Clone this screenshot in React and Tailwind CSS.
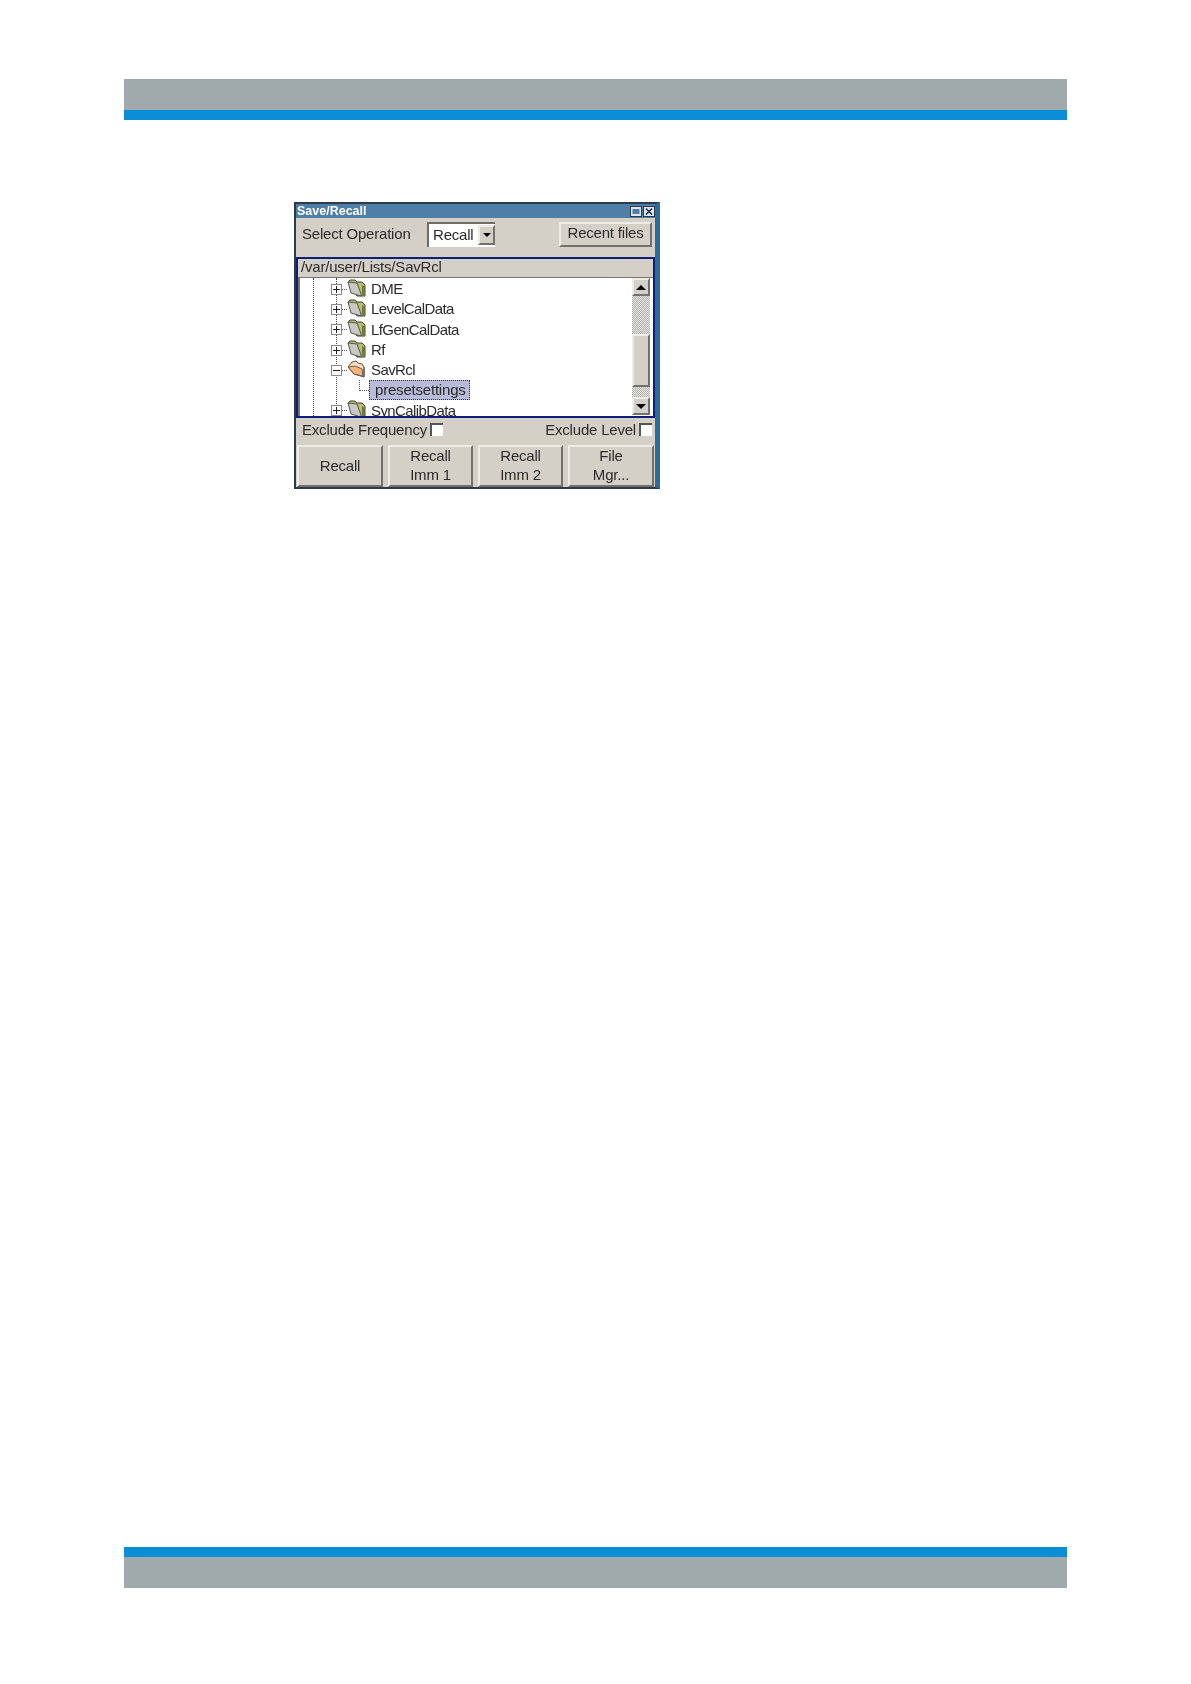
import React from "react";

const rows = [
  { name: "DME" },
  { name: "LevelCalData" },
  { name: "LfGenCalData" },
  { name: "Rf" },
  { name: "SavRcl", open: true },
  { name: "presetsettings", file: true },
  { name: "SynCalibData" },
];

const bevel = "border-2 border-t-[#eeece6] border-l-[#eeece6] border-r-[#73716c] border-b-[#73716c]";

const Folder = ({ open }) =>
  open ? (
    <svg width="19" height="18" viewBox="0 0 19 18" className="block shrink-0">
      <path d="M1 7 L5 2 L9 1 L11 3 L15 4 L17 7 L17 17 L7 14 Z" fill="#f8dcbc" stroke="#55504a" strokeWidth="1" />
      <path d="M1 7 L8 6 L15 9 L16 16 L7 14 Z" fill="#f4b47c" stroke="#6a5f52" strokeWidth="1" />
      <path d="M16 6 L18 8 L18 17 L16 16 Z" fill="#77746c" />
    </svg>
  ) : (
    <svg width="19" height="18" viewBox="0 0 19 18" className="block shrink-0">
      <path d="M1 3 L3 1 L8 1 L10 3 L15 3 L18 6 L18 17 L10 17 Z" fill="#b9bf6a" stroke="#3f3f36" strokeWidth="1" />
      <path d="M1 3 L10 4 L14 15 L14 17 L4 14 Z" fill="#c8c8c4" stroke="#55554e" strokeWidth="1" />
      <path d="M15 6 L18 8 L18 17 L15 17 Z" fill="#6f7a3a" />
    </svg>
  );

const Expander = ({ open }) => (
  <span className="relative flex h-[11px] w-[11px] shrink-0 items-center justify-center border border-[#8a8a8a] bg-white">
    <span className="absolute h-px w-[7px] bg-[#222]" />
    {!open && <span className="absolute h-[7px] w-px bg-[#222]" />}
  </span>
);

const TreeRow = ({ row }) => {
  if (row.file) {
    return (
      <div className="relative flex h-[20px] shrink-0 items-center pl-[69px]">
        <span className="absolute left-[59px] top-0 h-[11px] w-[10px] border-b border-l border-dotted border-[#555]" />
        <span className="flex h-[20px] w-[101px] items-center border border-dotted border-[#333] bg-[#b9bcd8] pl-[5px]">
          {row.name}
        </span>
      </div>
    );
  }
  return (
    <div className="flex h-[20.3px] shrink-0 items-center pl-[31px]">
      <Expander open={row.open} />
      <span className="w-[5px] shrink-0 border-t border-dotted border-[#555]" />
      <span className="-mt-[3px]">
        <Folder open={row.open} />
      </span>
      <span className="ml-[5px] tracking-[-0.6px]">{row.name}</span>
    </div>
  );
};

const ScrollButton = ({ up }) => (
  <div className={`flex h-[18px] w-[18px] items-center justify-center bg-[#d4d0c8] ${bevel}`}>
    <span
      className={
        up
          ? "h-0 w-0 border-x-[5px] border-b-[5px] border-x-transparent border-b-black"
          : "h-0 w-0 border-x-[5px] border-t-[5px] border-x-transparent border-t-black"
      }
    />
  </div>
);

const Check = () => (
  <span className="ml-[3px] block h-[13px] w-[13px] shrink-0 border-t-2 border-l-2 border-t-[#555] border-l-[#555] bg-white" />
);

const BigButton = ({ lines, width }) => (
  <div
    className={`flex h-[42px] flex-col items-center justify-center bg-[#d4d0c8] pb-[2px] leading-[19px] ${bevel} ${width}`}
  >
    {lines.map((l) => (
      <span key={l}>{l}</span>
    ))}
  </div>
);

export default function App() {
  return (
    <div className="flex min-h-[1684px] flex-col bg-white px-[124px] pb-[96px] pt-[79px] font-['Liberation_Sans',Arial,sans-serif]">
      <header>
        <div className="h-[31px] bg-[#a0a9ac]" />
        <div className="h-[10px] bg-[#0a8fd6]" />
      </header>

      {/* Save/Recall dialog */}
      <div className="ml-[170px] mt-[82px] flex h-[287px] w-[366px] flex-col border-2 border-r-[5px] border-[#2c3b47] border-r-[#2f6a9c] bg-[#d4d0c8] text-[15px] leading-[20px] tracking-[-0.2px] text-[#2b2b2b] blur-[0.4px]">
        <div className="flex h-[14px] shrink-0 items-center justify-between bg-[#4f7ea6] pl-[1px] text-[12.5px] font-bold leading-none tracking-normal text-white">
          <span>Save/Recall</span>
          <div className="flex items-center gap-[1px]">
            <svg width="12" height="11" viewBox="0 0 12 11">
              <rect x="0.5" y="0.5" width="11" height="10" fill="#dfe6ec" stroke="#2c3b47" />
              <rect x="2.5" y="3" width="7" height="5" fill="#4f7ea6" />
            </svg>
            <svg width="12" height="11" viewBox="0 0 12 11">
              <rect x="0.5" y="0.5" width="11" height="10" fill="#dfe6ec" stroke="#2c3b47" />
              <path d="M3 2.5 L9 8.5 M9 2.5 L3 8.5" stroke="#1f3344" strokeWidth="1.6" />
            </svg>
          </div>
        </div>

        <div className="flex h-[39px] shrink-0 items-start pl-[6px] pr-[3px] pt-[4px]">
          <span className="mt-[2px] w-[125px]">Select Operation</span>
          <div className="flex h-[25px] w-[68px] items-center border-t-2 border-l-2 border-t-[#6e6c68] border-l-[#6e6c68] bg-white pb-[2px] pl-[4px]">
            <span className="flex-1">Recall</span>
            <div className={`flex h-[20px] w-[17px] items-center justify-center bg-[#d4d0c8] ${bevel}`}>
              <span className="h-0 w-0 border-x-[4px] border-t-[4px] border-x-transparent border-t-black" />
            </div>
          </div>
          <div className={`ml-auto flex h-[25px] w-[93px] items-center justify-center bg-[#d4d0c8] pb-[3px] ${bevel}`}>
            Recent files
          </div>
        </div>

        {/* file tree */}
        <div className="flex h-[161px] shrink-0 flex-col border-2 border-[#0e1f7a]">
          <div className="flex h-[18px] shrink-0 items-center pb-[2px] pl-[3px]">/var/user/Lists/SavRcl</div>
          <div className="flex min-h-0 flex-1 border-l-2 border-t border-l-[#77746c] border-t-[#77746c] bg-white">
            <div className="relative flex min-w-0 flex-1 flex-col overflow-hidden">
              <span className="absolute bottom-0 left-[13px] top-0 border-l border-dotted border-[#444]" />
              <span className="absolute bottom-0 left-[36px] top-0 border-l border-dotted border-[#444]" />
              <div className="relative flex flex-col pt-[1px]">
                {rows.map((row) => (
                  <TreeRow key={row.name} row={row} />
                ))}
              </div>
            </div>
            <div className="flex w-[18px] shrink-0 flex-col">
              <ScrollButton up />
              <div className="h-[38px] bg-[repeating-conic-gradient(#b4b1a9_0_25%,#e6e6e4_0_50%)] bg-size-[2px_2px]" />
              <div className={`h-[53px] bg-[#d4d0c8] ${bevel}`} />
              <div className="h-[10px] bg-[repeating-conic-gradient(#b4b1a9_0_25%,#e6e6e4_0_50%)] bg-size-[2px_2px]" />
              <ScrollButton />
            </div>
            <div className="w-[3px] shrink-0 bg-white" />
          </div>
        </div>

        <div className="flex h-[25px] shrink-0 items-center pb-[2px] pl-[6px] pr-[3px]">
          <span>Exclude Frequency</span>
          <Check />
          <span className="ml-auto">Exclude Level</span>
          <Check />
        </div>

        <div className="mt-[2px] flex gap-[5px] pl-[1px]">
          <BigButton width="w-[86px]" lines={["Recall"]} />
          <BigButton width="w-[85px]" lines={["Recall", "Imm 1"]} />
          <BigButton width="w-[85px]" lines={["Recall", "Imm 2"]} />
          <BigButton width="w-[86px]" lines={["File", "Mgr..."]} />
        </div>
      </div>

      <footer className="mt-auto">
        <div className="h-[10px] bg-[#0a8fd6]" />
        <div className="h-[31px] bg-[#a0a9ac]" />
      </footer>
    </div>
  );
}
